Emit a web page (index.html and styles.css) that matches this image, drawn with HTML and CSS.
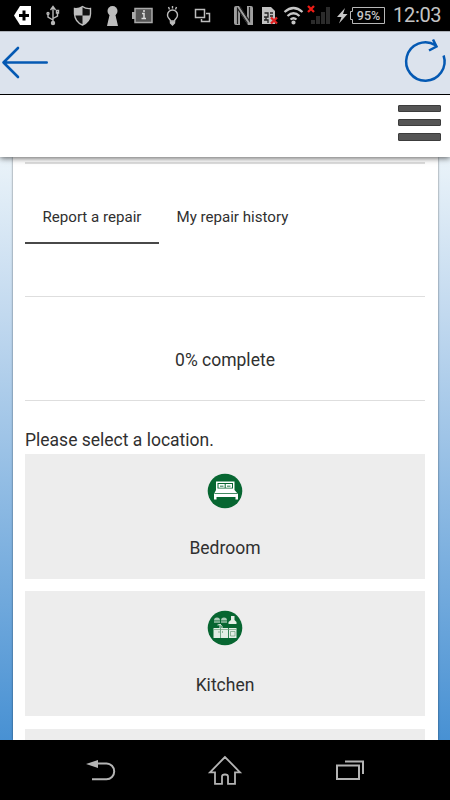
FILE: index.html
```html
<!DOCTYPE html>
<html lang="en">
<head>
<meta charset="utf-8">
<title>Report a repair</title>
<link rel="stylesheet" href="styles.css">
</head>
<body>
<div class="phone">
  <div class="status">
    <svg width="39" height="31" viewBox="0 0 39 31"><path fill="#fff" d="M20 6H31V25H20L14 15.5Z"/><path stroke="#000" stroke-width="3" d="M19 15.5H29M24 10.5V20.5"/></svg>
    <svg width="27" height="31" viewBox="39 0 27 31" fill="none" stroke="#b8b8b8" stroke-width="1.4"><path d="M53 8V23M48 14V17L53 20M57.5 12V16L53 18.5M50.5 10L53 6.5L55.5 10"/><circle cx="53" cy="23" r="1.5" fill="#b8b8b8"/><circle cx="48" cy="13.5" r="1"/><path d="M56.5 10.5H58.5V13H56.5Z"/></svg>
    <svg width="33" height="31" viewBox="66 0 33 31"><path fill="#111" stroke="#bdbdbd" stroke-width="1.4" d="M82.500 6.500Q86 9 90.500 8.500V14Q90 22 82.500 25Q75 22 74.500 14V8.500Q79 9 82.500 6.500Z"/><path fill="#bdbdbd" d="M82.500 6.500V15.500H74.500V8.500Q79 9 82.500 6.500ZM82.500 15.500H90.500Q89 22 82.500 25Z"/></svg>
    <svg width="27" height="31" viewBox="99 0 27 31"><g fill="#bdbdbd"><circle cx="112.500" cy="11" r="5"/><path d="M110 13H115L118 26H107Z"/></g></svg>
    <svg width="34" height="31" viewBox="126 0 34 31"><path fill="#aaa" d="M132 12H135V19H132Z"/><path fill="#555" stroke="#aaa" stroke-width="1.500" d="M135 8.500H152V22.500H135Z"/><path fill="none" stroke="#ddd" stroke-width="1.500" d="M142 13.500H144V18.500M141.500 18.500H146M143 11H145"/></svg>
    <svg width="25" height="31" viewBox="160 0 25 31" fill="none" stroke="#bdbdbd" stroke-width="1.400"><path d="M170.500 21Q170.500 20 169 18.500A5 5 0 1 1 176 18.500Q174.500 20 174.500 21ZM168.500 7L169.500 9.500M172.500 6V8.500M176.500 7L175.500 9.500"/><path fill="#bdbdbd" d="M170.500 22H174.500V23L172.500 25L170.500 23Z"/></svg>
    <svg width="35" height="31" viewBox="185 0 35 31" fill="none" stroke="#bdbdbd" stroke-width="1.500"><path d="M195.500 9.500H204.500V17.500H195.500ZM206 13.500H209.500V21.500H201.500V19"/></svg>
    <svg width="37" height="31" viewBox="220 0 37 31"><path fill="#a0a0a0" d="M236 6H239L247 18V6H251Q253 6 253 8V25H248L240 13V25H236Q234 25 234 23V8Q234 6 236 6Z"/><path fill="none" stroke="#222" stroke-width="1.200" d="M237.500 24V8.500L247.500 23.500M240 6.500L249.500 21V7"/></svg>
    <svg width="23" height="31" viewBox="257 0 23 31"><path fill="#c2c2c2" d="M262 7H271L275 11V24H262Z"/><path fill="none" stroke="#222" stroke-width="1.300" d="M264.500 13H268V17H264M270 13H273M270 16H273M264 20H268V23M266 17V20"/><path stroke="#e02020" stroke-width="2.300" d="M271 17.500L277 23.500M277 17.500L271 23.500"/></svg>
    <svg width="25" height="31" viewBox="280 0 25 31" fill="none" stroke="#c6c6c6" stroke-width="2.200"><path d="M284.500 12Q293.500 4 302.500 12M287.500 16Q293.500 10.500 299.500 16M290.500 19.500Q293.500 17 296.500 19.500"/><circle cx="293.500" cy="22.500" r="1" fill="#c6c6c6"/></svg>
    <svg width="28" height="31" viewBox="305 0 28 31"><path fill="#2b2b2b" d="M311 20H315V24H311ZM316 16H320V24H316ZM321 12H325V24H321ZM326 7H330V24H326Z"/><path stroke="#ec1c16" stroke-width="2.300" d="M308 6L314 12M314 6L308 12"/></svg>
    <svg width="16" height="31" viewBox="333 0 16 31"><path fill="#c6c6c6" d="M345 8L337 17H341.500L339 23.500L347.500 14H343Z"/></svg>
    <div class="charge"><svg width="36" height="17" viewBox="0 0 36 17"><path fill="none" stroke="#b8b8b8" d="M3.500 .5H35.500V16.500H3.500V12.500H1.500V4.500H3.500Z"/></svg><span>95%</span></div>
    <span class="clock">12:03</span>
  </div>
  <div class="appbar">
    <svg width="52" height="63" viewBox="0 31 52 63" fill="none" stroke="#0459b3" stroke-width="2.600" stroke-linecap="round" stroke-linejoin="round"><path d="M46.700 62.500H3.500M18 48L3.500 62.500L18 77"/></svg>
    <svg width="52" height="63" viewBox="398 31 52 63" fill="none" stroke="#0459b3" stroke-width="2.500"><path d="M442.600 55.500A19.200 19.200 0 1 1 434.500 45.200M432 39.500L435.500 46.500L428 50.500"/></svg>
  </div>
  <header class="header"><div class="menu"><i></i><i></i><i></i></div></header>
  <main class="page">
    <div class="sheet">
      <div class="tabs"><span class="tab active">Report a repair</span><span class="tab">My repair history</span></div>
      <div class="progress">0% complete</div>
      <p class="prompt">Please select a location.</p>
      <div class="tile">
        <svg width="36" height="36" viewBox="0 0 36 36"><circle cx="18" cy="18" r="17.300" fill="#076631"/><path fill="#fff" d="M9 8.500H27.500V17L31 21V26.500H28.500V24H9.500V26.500H7V21L9 17Z"/><path fill="#076631" d="M10.500 10H26V15.500H10.500ZM7.500 20.300H30.500V21H7.500Z"/><path fill="#fff" d="M11.500 11H17.700V14.700H11.500ZM18.700 11H25V14.700H18.700Z"/><path fill="#076631" d="M13 12.500H16.500V14H13ZM20 12.500H23.500V14H20Z" opacity=".6"/></svg>
        <span>Bedroom</span>
      </div>
      <div class="tile">
        <svg width="36" height="36" viewBox="0 0 36 36"><circle cx="18" cy="18" r="17.300" fill="#076631"/><g fill="#e3eee5"><path d="M21.500 14V12L24 10V6H27.500V10L29.500 12V14ZM7 11.500H13V12.500H7ZM14 11.500H20V12.500H14Z"/><path d="M7 10.500A3 3 0 0 1 13 10.500ZM14 10.500A3 3 0 0 1 20 10.500Z" opacity=".75"/><path d="M6.500 18H13.500V28H6.500ZM14 18H21V28H14ZM21.800 18H29.500V28H21.800Z"/></g><path fill="none" stroke="#e3eee5" stroke-width="1" d="M13 18V14.500L10.500 15M13 14L15 16.500V18"/><path fill="none" stroke="#6e9e7c" stroke-width=".7" d="M7 19.500H29M12 21V23M15.500 21V23M23.500 21.500H28V26H23.500Z"/></svg>
        <span>Kitchen</span>
      </div>
      <div class="tile"></div>
    </div>
  </main>
  <nav class="nav">
    <svg width="150" height="60" viewBox="0 740 150 60"><path fill="none" stroke="#b4b4b4" stroke-width="2" d="M94 763.500H106.500A7.700 7.900 0 0 1 106.500 779.300H92"/><path fill="#b4b4b4" d="M86 764L98 760V768Z"/></svg>
    <svg width="150" height="60" viewBox="150 740 150 60"><path fill="none" stroke="#b4b4b4" stroke-width="1.800" d="M225 757L210 772.300H215V783.800H222V776.500Q222 774.500 225 774.500Q228 774.500 228 776.500V783.800H235V772.300H240Z"/></svg>
    <svg width="150" height="60" viewBox="300 740 150 60"><path fill="none" stroke="#b4b4b4" stroke-width="2" d="M337 765.500H359V779H337ZM345 761.500H363V774"/></svg>
  </nav>
</div>
</body>
</html>
```
FILE: styles.css
```css
* { box-sizing: border-box; }
body { margin: 0; font-family: Roboto, "Liberation Sans", sans-serif; color: #303030; }
.phone { width: 450px; height: 800px; display: flex; flex-direction: column; overflow: hidden; }
svg { display: block; flex: none; }
.status { height: 31px; flex: none; display: flex; align-items: center; background: #000; }
.charge { width: 36px; height: 17px; flex: none; display: grid; color: #c6c6c6; font-size: 12.500px; line-height: 17px; font-weight: 500; text-align: center; }
.charge > * { grid-area: 1 / 1; }
.charge span { padding-left: 3px; }
.clock { margin-left: 8px; color: #c4c4c4; font-size: 20px; line-height: 29px; letter-spacing: -.3px; }
.appbar { height: 64px; flex: none; display: flex; justify-content: space-between; background: #dce3ed; border-top: 1px solid #aeb3ba; border-bottom: 1px solid #000; position: relative; z-index: 2; }
.appbar svg { margin-top: -1px; }
.appbar svg:last-child { margin-right: -.5px; }
.header { height: 62px; flex: none; display: flex; justify-content: flex-end; background: #fff; position: relative; z-index: 1; box-shadow: 0 1px 6px rgba(0,0,0,.65); }
.menu { width: 43px; margin: 10px 9.500px 0 0; display: flex; flex-direction: column; gap: 7px; }
.menu i { height: 7.200px; background: #555; border: 1px solid #3c3c3c; border-radius: 1px; }
.page { height: 583px; flex: none; padding: 0 12px 0 12.500px; background: linear-gradient(#eaf3f9, #c2d9ef 27%, #4891d3); }
.sheet { height: 583px; padding: 5px 13px 0 12.500px; background: #fff; overflow: hidden; box-shadow: 0 0 2px rgba(0,0,0,.55); }
.tabs { height: 135px; display: flex; align-items: flex-start; border-top: 2px solid #dedede; border-bottom: 1px solid #dedede; }
.tab { margin-top: 28px; height: 52px; padding: 0 17.500px; font-size: 15.100px; line-height: 50px; white-space: nowrap; }
.active { border-bottom: 2px solid #484848; }
.progress { height: 104px; padding-top: 50px; border-bottom: 1px solid #dedede; text-align: center; font-size: 17.500px; line-height: 26px; }
.prompt { height: 53px; margin: 0; padding-top: 26px; font-size: 17.500px; line-height: 26px; white-space: nowrap; }
.tile { height: 125px; margin-bottom: 12.400px; padding-top: 19px; display: flex; flex-direction: column; align-items: center; background: #ededed; font-size: 17.500px; line-height: 26px; }
.tile span { margin-top: 26px; }
.nav { height: 60px; flex: none; display: flex; background: #000; }
```
